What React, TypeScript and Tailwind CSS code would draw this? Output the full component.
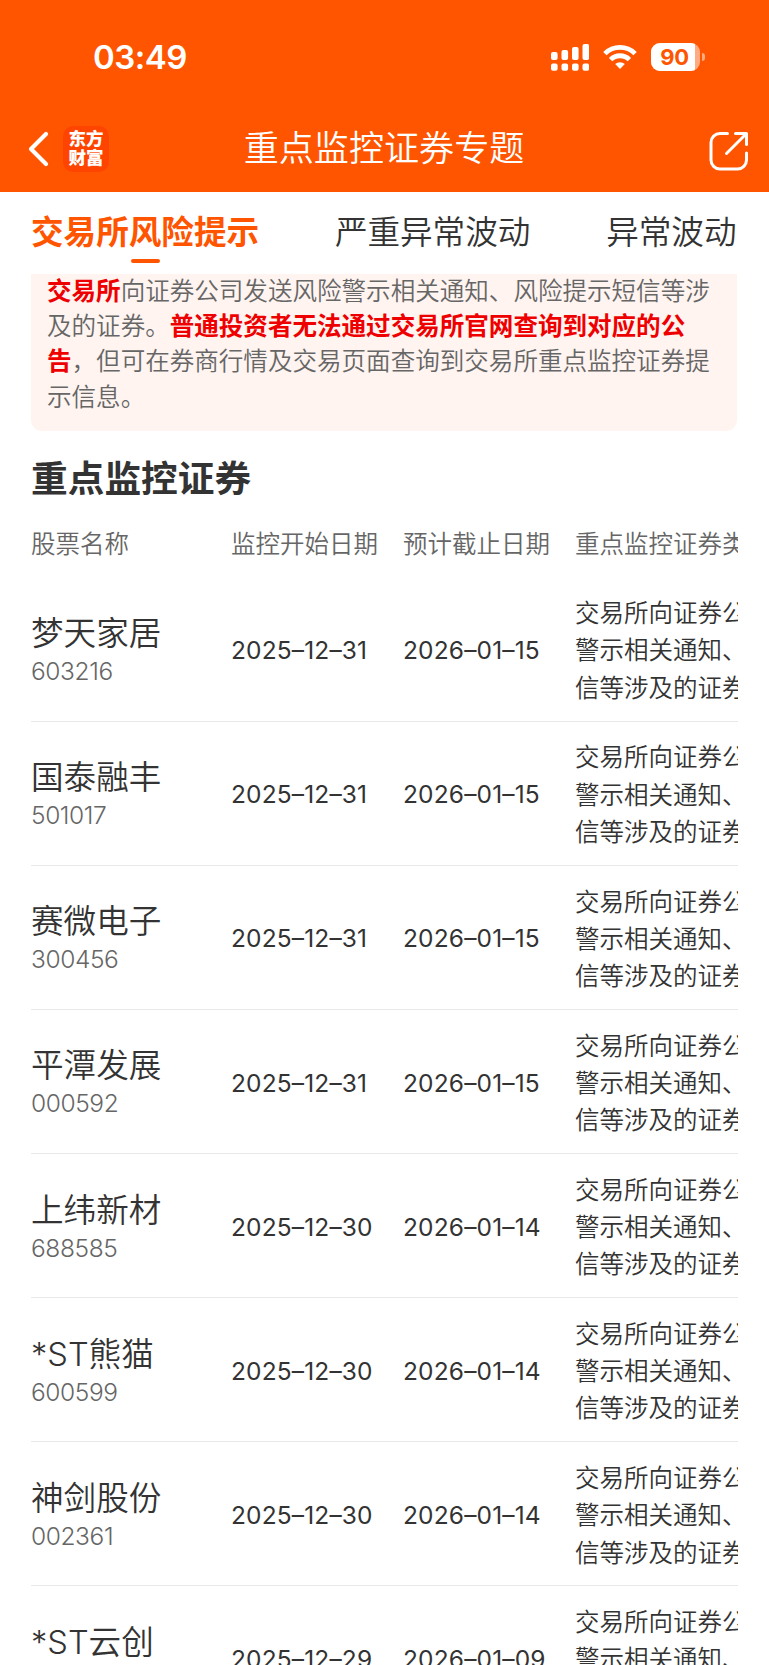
const tabs = ['交易所风险提示', '严重异常波动', '异常波动'];

const columns = ['股票名称', '监控开始日期', '预计截止日期', '重点监控证券类'];

const stocks = [
  { name: '梦天家居', code: '603216', start: '2025–12–31', end: '2026–01–15' },
  { name: '国泰融丰', code: '501017', start: '2025–12–31', end: '2026–01–15' },
  { name: '赛微电子', code: '300456', start: '2025–12–31', end: '2026–01–15' },
  { name: '平潭发展', code: '000592', start: '2025–12–31', end: '2026–01–15' },
  { name: '上纬新材', code: '688585', start: '2025–12–30', end: '2026–01–14' },
  { name: '*ST熊猫', code: '600599', start: '2025–12–30', end: '2026–01–14' },
  { name: '神剑股份', code: '002361', start: '2025–12–30', end: '2026–01–14' },
  { name: '*ST云创', code: '', start: '2025–12–29', end: '2026–01–09' },
];

const reason = ['交易所向证券公', '警示相关通知、', '信等涉及的证券'];

function SignalIcon() {
  const tops = [52, 50, 47, 44];
  return (
    <svg width="38" height="28" viewBox="551 43 38 28" fill="white">
      {tops.map((top, i) => (
        <g key={top}>
          <rect x={551 + i * 10.5} y={top} width="6.6" height={60 - top} rx="2" />
          <rect x={551 + i * 10.5} y="63.5" width="6.6" height="7.2" rx="2" />
        </g>
      ))}
    </svg>
  );
}

function WifiIcon() {
  return (
    <svg width="34" height="28" viewBox="0 0 34 28" fill="none" stroke="white" strokeWidth="4.8">
      <path d="M1.9 10.6a21.6 21.6 0 0 1 30.2 0" />
      <path d="M7.6 16.6a13.4 13.4 0 0 1 18.8 0" />
      <path d="M17 26l-4.8-4.9a6.9 6.9 0 0 1 9.6 0z" fill="white" stroke="none" />
    </svg>
  );
}

function Battery() {
  return (
    <div className="flex items-center gap-[2px]">
      <div className="flex h-7 w-[49px] overflow-hidden rounded-[9px] bg-[#ffaa80]">
        <div className="flex w-11 items-center justify-center bg-white pl-[3px] text-[22px] leading-none font-bold tracking-[-0.4px] text-[#ff5500]">
          90
        </div>
      </div>
      <div className="h-2 w-[3px] rounded-r-full bg-[#ffaa80]" />
    </div>
  );
}

function Header() {
  return (
    <header className="h-[191.5px] bg-[#ff5500] text-white">
      <div className="flex h-[114px] items-center justify-between pr-[64px] pl-[93px]">
        <span className="pt-px text-[33px] leading-none font-semibold tracking-[-0.5px]">03:49</span>
        <div className="flex items-center">
          <SignalIcon />
          <div className="mr-3.5 ml-3.5 flex">
            <WifiIcon />
          </div>
          <Battery />
        </div>
      </div>
      <div className="flex h-[70px] items-center justify-between pr-[20px] pl-[28px]">
        <div className="flex w-[191px] items-center">
          <svg width="21" height="36" viewBox="0 0 21 36" fill="none" stroke="white" strokeWidth="4.2" strokeLinecap="round" strokeLinejoin="round">
            <path d="M18 3L3 18L18 33" />
          </svg>
          <div className="ml-[14px] flex h-[46px] w-[46px] flex-col items-center justify-center rounded-[10px] bg-[#ff4400] pb-0.5 text-[17.5px] leading-[19.5px] font-black">
            <span>东方</span>
            <span>财富</span>
          </div>
        </div>
        <h1 className="text-[35.1px] leading-none font-[350]">重点监控证券专题</h1>
        <div className="flex w-[200px] justify-end pt-1">
          <svg width="40" height="40" viewBox="0 0 40 40" fill="none" stroke="white" strokeWidth="3" strokeLinecap="round" strokeLinejoin="round">
            <path d="M18.5 2.5H11A9 9 0 0 0 2 11.5V29A9 9 0 0 0 11 38H28.5A9 9 0 0 0 37.5 29V22" />
            <path d="M26.5 2.5H37.5V13.5" />
            <path d="M37 3L17.5 22.5" />
          </svg>
        </div>
      </div>
    </header>
  );
}

function Tabs() {
  return (
    <nav className="flex h-[82px] justify-between pt-[21px] pr-[32.5px] pl-[31px] text-[32.6px] leading-[39px] text-[#333]">
      {tabs.map((tab, i) => (
        <div key={tab} className="flex flex-col items-center">
          <span className={i === 0 ? 'font-bold text-[#ff5500]' : 'font-[350]'}>{tab}</span>
          {i === 0 && <span className="mt-[7px] h-1 w-[29px] rounded-full bg-[#ff5500]" />}
        </div>
      ))}
    </nav>
  );
}

function Notice() {
  return (
    <section className="mr-8 ml-[31px] h-[157px] rounded-b-[11px] bg-[#fff4f0] pl-[16px] text-[24.55px] leading-[35.4px] font-[350] whitespace-nowrap text-[#666]">
      <p>
        <b className="font-bold text-[#ee0000]">交易所</b>向证券公司发送风险警示相关通知、风险提示短信等涉
      </p>
      <p>
        及的证券。<b className="font-bold text-[#ee0000]">普通投资者无法通过交易所官网查询到对应的公</b>
      </p>
      <p>
        <b className="font-bold text-[#ee0000]">告</b>&#xff0c;但可在券商行情及交易页面查询到交易所重点监控证券提
      </p>
      <p>示信息。</p>
    </section>
  );
}

function StockTable() {
  return (
    <section className="mx-[31px] overflow-hidden text-[24.5px] font-[350] text-[#333]">
      <div className="grid h-[67px] w-[900px] grid-cols-[200px_172px_172px_356px] items-center text-[#666]">
        {columns.map((col) => (
          <span key={col}>{col}</span>
        ))}
      </div>
      {stocks.map((stock) => (
        <div
          key={stock.name}
          className="grid h-[144.15px] w-[900px] grid-cols-[200px_172px_172px_356px] items-center border-b border-[#e8e8e8] pt-1 whitespace-nowrap"
        >
          <div>
            <div className="text-[32.6px] leading-[40px]">{stock.name}</div>
            <div className="h-9 leading-9 tracking-[-0.4px] text-[#666]">{stock.code}</div>
          </div>
          <span className="pb-px font-normal tracking-[0.15px]">{stock.start}</span>
          <span className="pb-px font-normal tracking-[0.15px]">{stock.end}</span>
          <div className="leading-[37.2px]">
            {reason.map((line) => (
              <div key={line}>{line}</div>
            ))}
          </div>
        </div>
      ))}
    </section>
  );
}

export default function App() {
  return (
    <div className="h-[1665px] w-[769px] overflow-hidden bg-white font-[Inter,'Noto_Sans_CJK_SC',sans-serif]">
      <Header />
      <Tabs />
      <Notice />
      <h2 className="mt-[23px] ml-[31px] h-[57px] text-[36.7px] leading-[50px] font-bold text-[#333]">重点监控证券</h2>
      <StockTable />
    </div>
  );
}
